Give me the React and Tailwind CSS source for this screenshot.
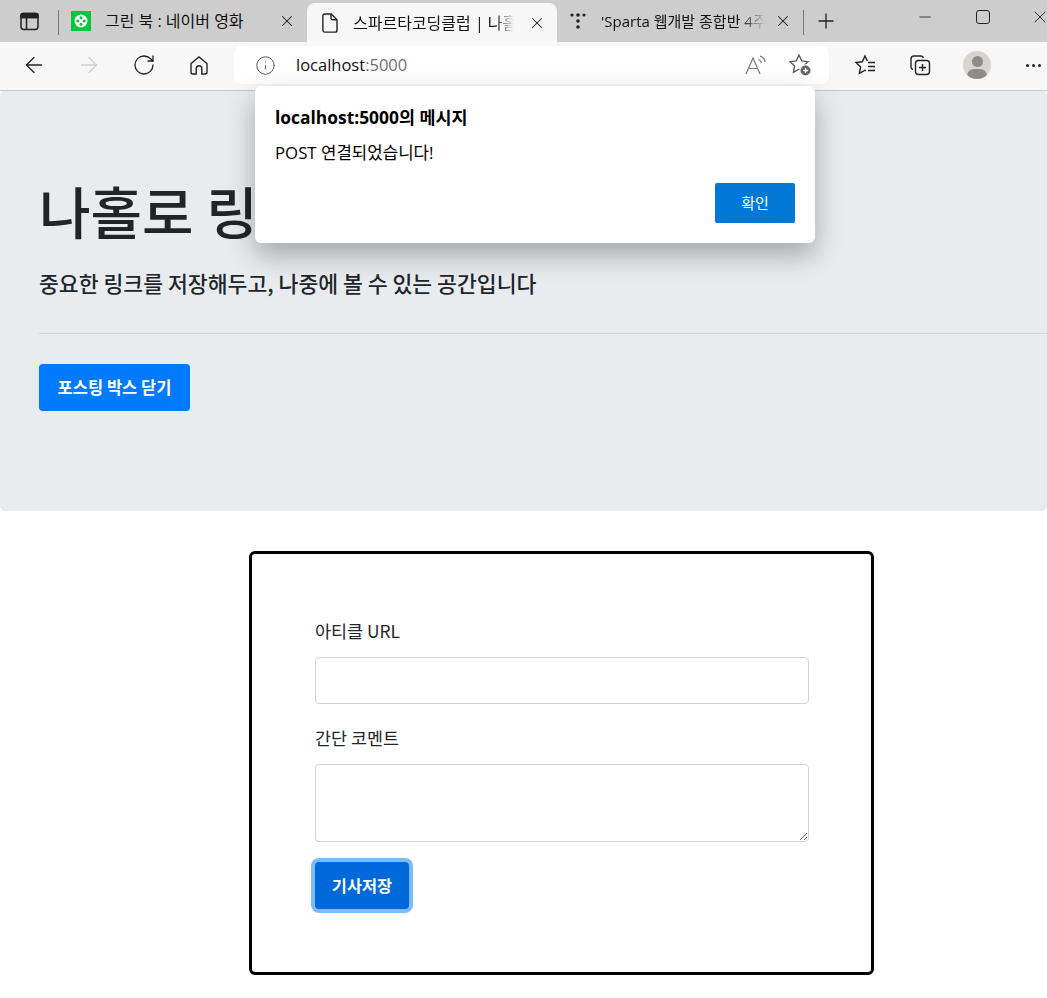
import { ArrowLeft, ArrowRight, RotateCw, Info, X, Plus, Minus } from "lucide-react";

const UI_FONT = "font-['Open_Sans','Noto_Sans_CJK_KR',sans-serif]";
const PAGE_FONT = "font-['Noto_Sans_CJK_KR','Noto_Sans',sans-serif]";
const STAR = "M11 2l2.7 5.8 6.3.8-4.6 4.4 1.2 6.3L11 16.2l-5.6 3.1 1.2-6.3L2 8.6l6.3-.8z";

const TabClose = ({ className = "" }) => (
  <X size={18} strokeWidth={1.4} className={"shrink-0 text-[#222] " + className} />
);

const TabStrip = () => (
  <div className="flex h-[42px] items-end bg-[#cdcdcd] pl-[20px]">
    {/* sidebar toggle */}
    <div className="flex h-[42px] w-[38px] shrink-0 items-center">
      <svg width="19" height="19" viewBox="0 0 19 19" fill="none" stroke="#222" strokeWidth="1.5">
        <rect x="1" y="1.5" width="17" height="16" rx="3" />
        <path d="M1 5.5h17M6.5 5.5v12" />
        <path d="M1 5.5h17V3a1.5 1.5 0 0 0-1.5-1.5h-14A1.5 1.5 0 0 0 1 3z" fill="#222" />
      </svg>
    </div>
    <div className="mb-[7px] h-[25px] w-px shrink-0 bg-[#777]" />

    {/* first tab */}
    <div className="flex h-[42px] w-[248px] shrink-0 items-center pl-[12px]">
      <svg width="20" height="20" viewBox="0 0 20 20" className="shrink-0">
        <rect width="20" height="20" fill="#00c73c" />
        <circle cx="10" cy="10" r="6.5" fill="#fff" />
        <circle cx="10" cy="6.8" r="1.5" fill="#00c73c" />
        <circle cx="10" cy="13.2" r="1.5" fill="#00c73c" />
        <circle cx="6.8" cy="10" r="1.5" fill="#00c73c" />
        <circle cx="13.2" cy="10" r="1.5" fill="#00c73c" />
      </svg>
      <span className="ml-[14px] w-[173px] truncate text-[16px] text-[#111]">그린 북 : 네이버 영화</span>
      <TabClose />
    </div>

    {/* active tab */}
    <div className="flex h-[39px] w-[250px] shrink-0 items-center rounded-t-lg bg-[#f7f7f7] pl-[15px]">
      <svg width="16" height="20" viewBox="0 0 16 20" fill="none" stroke="#222" strokeWidth="1.4" className="shrink-0">
        <path d="M2.8 1h6.4L15 6.8v10.4a1.9 1.9 0 0 1-1.9 1.9H2.8a1.9 1.9 0 0 1-1.9-1.9V2.9A1.9 1.9 0 0 1 2.8 1z" />
        <path d="M9 1v4.2a1.6 1.6 0 0 0 1.6 1.6H15" />
      </svg>
      <span className="ml-[15px] w-[161px] overflow-hidden whitespace-nowrap text-[16px] text-[#111] [mask-image:linear-gradient(to_right,#000_88%,transparent)]">
        스파르타코딩클럽 | 나홀로 링크 메모장
      </span>
      <TabClose className="ml-[14px]" />
    </div>

    {/* third tab */}
    <div className="flex h-[42px] w-[246px] shrink-0 items-center pl-[13px]">
      <svg width="16" height="16" viewBox="0 0 16 16" fill="#222" className="shrink-0">
        <circle cx="2" cy="2" r="1.6" />
        <circle cx="8" cy="2" r="1.8" />
        <circle cx="14" cy="2" r="1.6" />
        <circle cx="8" cy="8" r="1.8" />
        <circle cx="8" cy="14" r="1.8" />
      </svg>
      <span className="ml-[15px] w-[164px] overflow-hidden whitespace-nowrap text-[15px] text-[#111] [mask-image:linear-gradient(to_right,#000_85%,transparent)]">
        'Sparta 웹개발 종합반 4주차
      </span>
      <TabClose className="ml-[9px]" />
    </div>
    <div className="mb-[7px] h-[25px] w-px shrink-0 bg-[#777]" />
    <div className="flex h-[42px] w-[44px] shrink-0 items-center justify-center">
      <Plus size={24} strokeWidth={1.3} className="text-[#222]" />
    </div>

    {/* window buttons */}
    <div className="ml-[68px] flex h-[42px] shrink-0 items-start pt-[7px]">
      <Minus size={18} strokeWidth={1.1} className="mt-px shrink-0 text-[#222]" />
      <div className="ml-[42px] mt-[3px] h-[14px] w-[14px] shrink-0 rounded-[3px] border border-[#222]" />
      <X size={20} strokeWidth={1.1} className="ml-[40px] shrink-0 text-[#222]" />
    </div>
  </div>
);

const Toolbar = () => (
  <div className="flex h-[49px] items-center border-b border-[#c8c8c8] bg-[#f7f7f7] pb-[2px]">
    <ArrowLeft size={26} strokeWidth={1.2} className="ml-[21px] text-[#222]" />
    <ArrowRight size={26} strokeWidth={1.2} className="ml-[29px] text-[#cfcfcf]" />
    <RotateCw size={24} strokeWidth={1.3} className="ml-[30px] text-[#222]" />
    <svg width="20" height="21" viewBox="0 0 20 21" fill="none" stroke="#222" strokeWidth="1.4" className="ml-[33px]">
      <path d="M2 8.5 10 2l8 6.5V17a2 2 0 0 1-2 2h-3.2v-5.5a2.8 2.8 0 0 0-5.6 0V19H4a2 2 0 0 1-2-2z" />
    </svg>

    {/* address bar */}
    <div className="ml-[25px] flex h-[38px] w-[595px] items-center rounded-lg bg-white">
      <Info size={21} strokeWidth={1.1} className="ml-[21px] text-[#555]" />
      <span className="ml-[20px] text-[16.5px] text-[#111]">
        localhost<span className="text-[#6f6f6f]">:5000</span>
      </span>
      <svg width="24" height="22" viewBox="0 0 24 22" fill="none" stroke="#777" strokeWidth="1.2" className="ml-auto">
        <path d="M2 20 9 4l7 16M4.6 14.5h8.8" />
        <path d="M14.5 5.5c1.6.6 2.6 1.8 3 3.4M16 2c2.8.9 4.6 3 5.2 6" />
      </svg>
      <svg width="24" height="24" viewBox="0 0 24 24" fill="none" stroke="#555" strokeWidth="1.3" className="ml-[20px] mr-[17px]">
        <path d={STAR} />
        <circle cx="17.5" cy="17.5" r="6.2" fill="#fff" stroke="none" />
        <circle cx="17.5" cy="17.5" r="5" fill="#666" stroke="none" />
        <path d="M17.5 15v5M15 17.5h5" stroke="#fff" strokeWidth="1.4" />
      </svg>
    </div>

    {/* right-hand tools */}
    <svg width="22" height="22" viewBox="0 0 22 22" fill="none" stroke="#222" strokeWidth="1.4" className="ml-[25px]">
      <path d={STAR} />
      <rect x="12" y="7" width="10" height="14" fill="#f7f7f7" stroke="none" />
      <path d="M14 8.5h7M14 12.5h7M14 16.5h7" />
    </svg>
    <svg width="22" height="22" viewBox="0 0 22 22" fill="none" stroke="#222" strokeWidth="1.4" className="ml-[33px]">
      <path d="M4 15.5A2.5 2.5 0 0 1 2 13V5a3 3 0 0 1 3-3h7a2.5 2.5 0 0 1 2.4 2" />
      <rect x="6.5" y="6.5" width="14" height="14" rx="3" />
      <path d="M13.5 10v7M10 13.5h7" />
    </svg>
    <div className="relative ml-[32px] h-[28px] w-[28px] overflow-hidden rounded-full bg-[#d6d4d0]">
      <div className="mx-auto mt-[5px] h-[11px] w-[11px] rounded-full bg-[#8f8c88]" />
      <div className="mx-auto mt-[2px] h-[14px] w-[20px] rounded-full bg-[#8f8c88]" />
    </div>
    <div className="ml-[35px] flex gap-[3px]">
      <div className="h-[3px] w-[3px] rounded-full bg-[#222]" />
      <div className="h-[3px] w-[3px] rounded-full bg-[#222]" />
      <div className="h-[3px] w-[3px] rounded-full bg-[#222]" />
    </div>
  </div>
);

const AlertDialog = () => (
  <div className={"absolute left-[255px] top-[86px] h-[157px] w-[560px] rounded-md bg-white px-5 pt-5 shadow-[0_12px_28px_rgba(0,0,0,0.3)] " + UI_FONT}>
    <p className="text-[17.4px] font-bold leading-[22px] text-black">localhost:5000의 메시지</p>
    <p className="mt-[15px] text-[16.8px] leading-[20px] text-black">POST 연결되었습니다!</p>
    <div className="mt-[20px] flex justify-end">
      <button className="h-[40px] w-[80px] rounded-[2px] bg-[#0078d4] text-[15px] text-white">확인</button>
    </div>
  </div>
);

const Jumbotron = () => (
  <div className="h-[420px] rounded-[5px] bg-[#e9ecef] pl-[39px] pt-[90px]">
    <h1 className="whitespace-nowrap text-[56px] font-medium leading-[58px] text-[#212529]">나홀로 링크 메모장</h1>
    <p className="mt-[30px] text-[21.6px] font-medium leading-[27px] text-[#212529]">
      중요한 링크를 저장해두고, 나중에 볼 수 있는 공간입니다
    </p>
    <hr className="mt-[37px] border-[#d3d6d9]" />
    <button className="mt-[30px] h-[47px] w-[151px] rounded-[4px] bg-[#007bff] text-[16.5px] font-bold text-white">
      포스팅 박스 닫기
    </button>
  </div>
);

const PostingBox = () => (
  <div className="ml-[249px] mt-[40px] h-[424px] w-[625px] rounded-[6px] border-[3px] border-black px-[63px] pt-[65px]">
    <label className="block text-[17.4px] leading-[24px] text-[#212529]">아티클 URL</label>
    <input className="mt-[14px] block h-[47px] w-[494px] rounded-[4px] border border-[#ced4da] bg-white" />
    <label className="mt-[22px] block text-[17.4px] leading-[24px] text-[#212529]">간단 코멘트</label>
    <textarea className="mt-[14px] block h-[78px] w-[494px] rounded-[4px] border border-[#ced4da] bg-white" />
    <button className="mt-[20px] block h-[47px] w-[94px] rounded-[4px] bg-[#0069d9] text-[16.4px] font-bold text-white shadow-[0_0_0_4px_#7fbaff]">
      기사저장
    </button>
  </div>
);

export default function App() {
  return (
    <div className="relative h-[998px] w-[1047px] overflow-hidden bg-white">
      <div className={UI_FONT}>
        <TabStrip />
        <Toolbar />
      </div>
      <div className={PAGE_FONT}>
        <Jumbotron />
        <PostingBox />
      </div>
      <AlertDialog />
    </div>
  );
}
